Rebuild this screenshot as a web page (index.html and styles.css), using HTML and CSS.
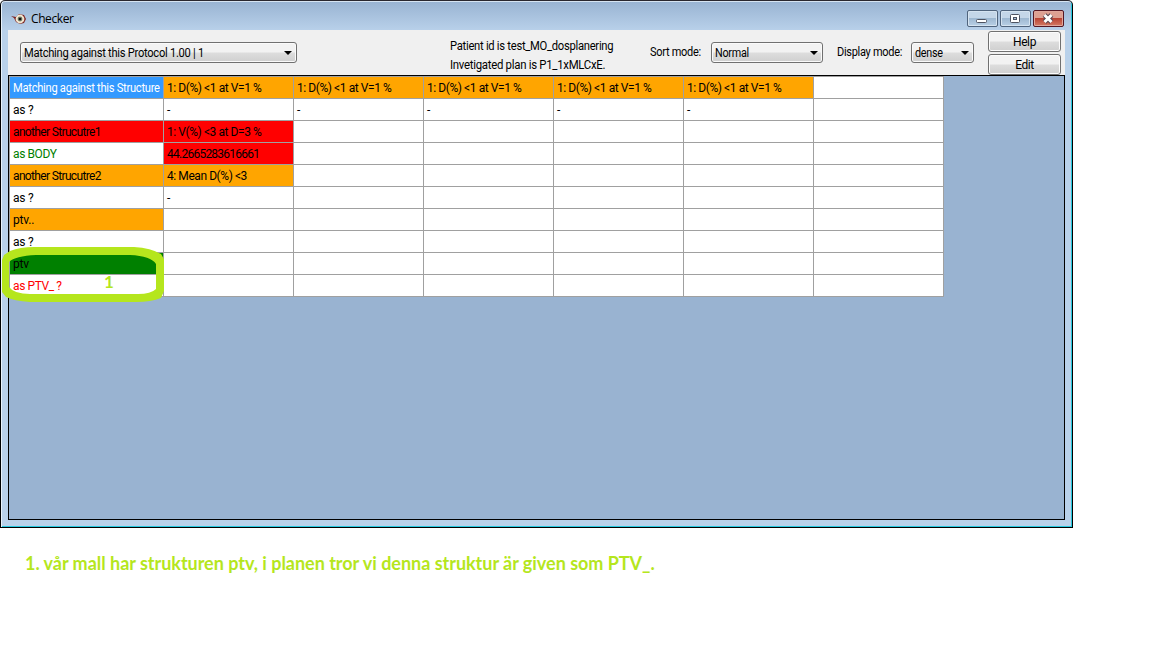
FILE: index.html
```html
<!DOCTYPE html>
<html lang="en">
<head>
<meta charset="utf-8">
<title>Checker</title>
<link rel="stylesheet" href="styles.css">
</head>
<body>
<main class="window">
  <header class="titlebar">
    <svg class="app-icon" width="16" height="12" viewBox="0 0 16 12"><path d="M0 3l5 1 3-3 5 1 2 4-2 4-4 1-4-2-2-4z" fill="#7d2420"/><circle cx="9" cy="6" r="4.400" fill="#f4e6d0"/><circle cx="9" cy="6" r="2.400" fill="#71806b"/><circle cx="9" cy="6" r="1.300" fill="#111"/></svg>
    <h1 class="title">Checker</h1>
    <div class="controls">
      <span class="control minimize"><svg width="30" height="16"><rect x="9.500" y="9.500" width="10" height="3" rx="1" fill="#fff" stroke="#4e5361"/></svg></span>
      <span class="control maximize"><svg width="30" height="16"><rect x="10.500" y="4.500" width="9" height="8" rx="1" fill="#fff" stroke="#4e5361"/><rect x="13.500" y="7.500" width="3" height="2" fill="#a8c3dd" stroke="#4e5361"/></svg></span>
      <span class="control close"><svg width="30" height="16"><path d="M11.500 5l7 7M18.500 5l-7 7" stroke="#584650" stroke-width="5"/><path d="M11.500 5l7 7M18.500 5l-7 7" stroke="#fff" stroke-width="3"/></svg></span>
    </div>
  </header>
  <section class="toolbar">
    <div class="select protocol"><span class="protocol-text">Matching against this Protocol 1.00 | 1</span><i class="arrow"></i></div>
    <div class="info"><p class="patient">Patient id is test_MO_dosplanering</p><p class="plan">Invetigated plan is P1_1xMLCxE.</p></div>
    <span class="label sort-label">Sort mode:</span>
    <div class="select sort"><span class="option">Normal</span><i class="arrow"></i></div>
    <span class="label display-label">Display mode:</span>
    <div class="select display"><span class="option">dense</span><i class="arrow"></i></div>
    <div class="buttons"><div class="button">Help</div><div class="button">Edit</div></div>
  </section>
  <section class="workspace">
    <div class="grid">
      <div class="cell selected"><span class="head-text">Matching against this Structure</span></div><div class="cell orange rule">1: D(%) &lt;1 at V=1 %</div><div class="cell orange rule">1: D(%) &lt;1 at V=1 %</div><div class="cell orange rule">1: D(%) &lt;1 at V=1 %</div><div class="cell orange rule">1: D(%) &lt;1 at V=1 %</div><div class="cell orange rule">1: D(%) &lt;1 at V=1 %</div><div class="cell"></div>
      <div class="cell">as ?</div><div class="cell">-</div><div class="cell">-</div><div class="cell">-</div><div class="cell">-</div><div class="cell">-</div><div class="cell"></div>
      <div class="cell red name">another Strucutre1</div><div class="cell red rule">1: V(%) &lt;3 at D=3 %</div><div class="cell"></div><div class="cell"></div><div class="cell"></div><div class="cell"></div><div class="cell"></div>
      <div class="cell matched">as BODY</div><div class="cell red value">44.2665283616661</div><div class="cell"></div><div class="cell"></div><div class="cell"></div><div class="cell"></div><div class="cell"></div>
      <div class="cell orange name">another Strucutre2</div><div class="cell orange mean">4: Mean D(%) &lt;3</div><div class="cell"></div><div class="cell"></div><div class="cell"></div><div class="cell"></div><div class="cell"></div>
      <div class="cell">as ?</div><div class="cell">-</div><div class="cell"></div><div class="cell"></div><div class="cell"></div><div class="cell"></div><div class="cell"></div>
      <div class="cell orange">ptv..</div><div class="cell"></div><div class="cell"></div><div class="cell"></div><div class="cell"></div><div class="cell"></div><div class="cell"></div>
      <div class="cell">as ?</div><div class="cell"></div><div class="cell"></div><div class="cell"></div><div class="cell"></div><div class="cell"></div><div class="cell"></div>
      <div class="cell green">ptv</div><div class="cell"></div><div class="cell"></div><div class="cell"></div><div class="cell"></div><div class="cell"></div><div class="cell"></div>
      <div class="cell guess">as PTV_ ?</div><div class="cell"></div><div class="cell"></div><div class="cell"></div><div class="cell"></div><div class="cell"></div><div class="cell"></div>
    </div>
  </section>
</main>
<svg class="marker" width="164" height="55" viewBox="0 0 164 55"><path fill="#b5e61d" fill-rule="evenodd" d="M10 4Q20 0 34 0H134Q151 1 161 7L164 12V44L161 51Q151 55 136 55H30Q14 54 6 50L2 45V13L4 8zM9 15V40Q14 47 30 47H138Q151 47 156 42V17Q151 9 130 8H36Q15 9 9 15z"/></svg>
<span class="marker-number">1</span>
<p class="note">1. vår mall har strukturen ptv, i planen tror vi denna struktur är given som PTV_.</p>
</body>
</html>
```
FILE: styles.css
```css
* { box-sizing: border-box; }
body { margin: 0; width: 1152px; height: 648px; overflow: hidden; background: #fff; color: #000; font: 12px/14px Roboto, "Liberation Sans", sans-serif; }
p, h1 { margin: 0; font-weight: normal; }
.window { width: 1073px; height: 528px; padding: 0 6px 6px; border: 1px solid #000; border-top-color: #29272f; border-radius: 5px 5px 0 0; background: linear-gradient(#98b3d2, #b9d1ea 30px, #b9d1ea); box-shadow: inset 1px 0 #e8f2fb, inset -1px -1px #25c8df, inset 0 1px #d6e4f2; }
.titlebar { height: 29px; display: flex; align-items: flex-start; padding: 0 2px 0 4px; }
.app-icon { margin-top: 12px; }
.title { margin: 11px auto 0 4px; font: 12px/14px "Open Sans", sans-serif; letter-spacing: -.4px; }
.controls { display: flex; gap: 2px; margin-top: 9px; }
.control { width: 31px; height: 17px; border: 1px solid #50647d; border-radius: 2px; background: linear-gradient(#c4d6e8 0 45%, #9eb8d1 50%, #b9d0e6); box-shadow: inset 0 0 0 1px #d5e3f0; }
.control svg { display: block; margin: -1px; }
.close { border-color: #541723; background: linear-gradient(#dda092 0 45%, #b94333 50%, #d47b65); box-shadow: inset 0 0 0 1px #e0a79c; }
.toolbar { height: 45px; margin: 0 0 0 1px; width: 1057px; display: flex; align-items: flex-start; background: #f0f0f0; }
.select { display: flex; justify-content: space-between; height: 21px; margin-top: 12px; padding: 3px 4px 0 3px; border: 1px solid #707070; border-radius: 3px; background: linear-gradient(#f2f2f2 0 48%, #ddd 52%, #cfcfcf); box-shadow: inset 0 0 0 1px #fafafa; white-space: nowrap; }
.arrow { border: 4px solid transparent; border-top-color: #000; border-bottom: 0; height: 4px; margin-top: 5px; }
.protocol { width: 277px; margin-left: 12px; }
.protocol-text, .patient, .plan, .label, .option, .head-text { transform-origin: left; letter-spacing: -.3px; }
.protocol-text { transform: scaleX(.93); }
.info { width: 200px; margin: 7px 0 0 153px; line-height: 19px; white-space: nowrap; }
.patient { transform: scaleX(.935); }
.plan { transform: scaleX(.95); }
.label { margin-top: 15px; white-space: nowrap; transform: scaleX(.915); }
.option { transform: scaleX(.9); }
.sort-label { width: 61px; }
.sort { width: 112px; }
.display-label { margin-left: 14px; width: 74px; }
.display { width: 63px; }
.buttons { display: grid; gap: 2px; margin: 1px 0 0 14px; }
.button { width: 73px; height: 21px; border: 1px solid #707070; border-radius: 3px; background: linear-gradient(#f2f2f2 0 48%, #ddd 52%, #cfcfcf); box-shadow: inset 0 0 0 1px #fcfcfc; text-align: center; line-height: 20px; letter-spacing: -.4px; }
.workspace { width: 1057px; height: 445px; margin-left: 1px; border: 1px solid #000; background: #99b3d1; }
.grid { display: grid; grid-template-columns: 155px repeat(6, 130px); grid-auto-rows: 22px; width: 935px; border-top: 1px solid #a0a0a0; }
.cell { min-width: 0; padding: 4px 0 0 3px; border-right: 1px solid #a0a0a0; border-bottom: 1px solid #a0a0a0; background: #fff; white-space: nowrap; letter-spacing: -.2px; }
.cell:nth-child(7n + 1) { border-left: 1px solid #a0a0a0; }
.cell.selected { background: #39f; color: #fff; }
.cell.orange { background: #ffa500; }
.cell.red { background: #f00; }
.cell.green { background: #008000; }
.cell.matched { color: #008000; letter-spacing: -.4px; }
.cell.guess { color: #f00; letter-spacing: -.4px; }
.head-text { display: inline-block; transform: scaleX(.93); }
.cell.rule { letter-spacing: -.43px; }
.cell.name { letter-spacing: -.65px; }
.cell.value { letter-spacing: -.75px; }
.cell.mean { letter-spacing: -.43px; }
.marker { position: absolute; left: 0; top: 247px; }
.marker-number { position: absolute; left: 104px; top: 272px; color: #b5e61d; font: bold 17px/20px Lato, sans-serif; }
.note { margin: 23px 0 0 25px; color: #b5e61d; font: bold 18px/24px Lato, sans-serif; letter-spacing: -.025px; white-space: nowrap; }
```
